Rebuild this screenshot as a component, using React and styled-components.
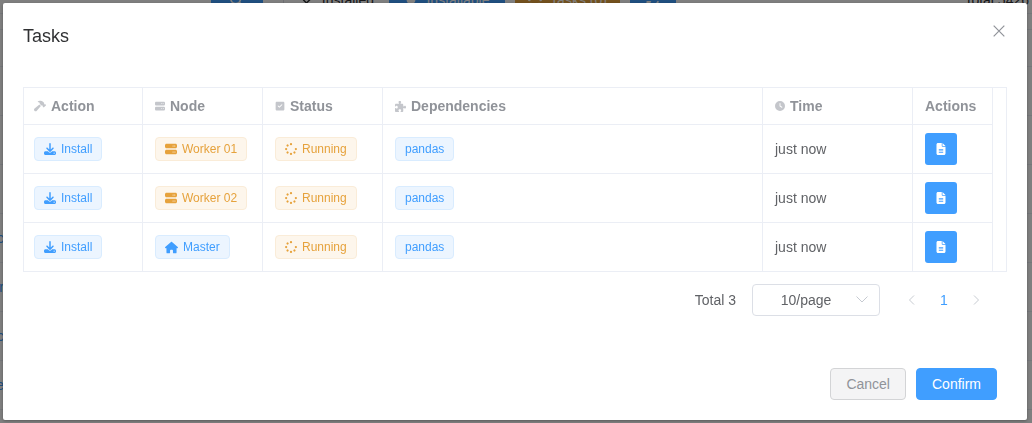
import React from "react";
import styled, { createGlobalStyle, css } from "styled-components";
import {
  FaHammer,
  FaServer,
  FaSquareCheck,
  FaPuzzlePiece,
  FaClock,
  FaHouse,
  FaFileLines,
  FaSpinner,
  FaDownload,
  FaMagnifyingGlass,
  FaCheck,
  FaPlug,
  FaArrowsRotate,
} from "react-icons/fa6";

const GlobalStyle = createGlobalStyle`
  * { box-sizing: border-box; }
  html, body, #root { height: 100%; }
  body {
    margin: 0;
    overflow: hidden;
    background: #fff;
    color: #606266;
    font: 14px/20px "Liberation Sans", Helvetica, Arial, sans-serif;
  }
  button, select { font: inherit; margin: 0; }
`;

/* Page behind the dialog */
const Page = styled.div`
  position: absolute;
  inset: 0;
  overflow: hidden;
  background: #fff;
`;

const Toolbar = styled.div`
  display: flex;
  align-items: center;
  gap: 20px;
  margin-top: -14px;
  padding: 0 3px 0 0;
  height: 28px;
  border-bottom: 1px solid #ebeef5;
`;

const SearchBox = styled.div`
  display: flex;
  justify-content: flex-end;
  width: 263px;
`;

const ToolButton = styled.button`
  display: flex;
  align-items: center;
  justify-content: ${(p) => (p.$plain ? "flex-end" : "center")};
  gap: 8px;
  width: ${(p) => p.$width}px;
  height: 32px;
  padding: ${(p) => (p.$plain ? "0 5px 0 0" : "0")};
  border: 0;
  border-left: ${(p) => (p.$plain ? "1px solid #dcdfe6" : "0")};
  color: ${(p) => (p.$plain ? "#303133" : "#fff")};
  background: ${(p) => (p.$plain ? "#fff" : p.$warning ? "#e6a23c" : "#409eff")};
`;

const ToolGroup = styled.div`
  display: flex;
  gap: 10px;
`;

const PageTotal = styled.span`
  margin-left: auto;
  color: #303133;
`;

const PageRows = styled.div`
  margin-top: 15px;
  border-top: 1px solid #ebeef5;
`;

const PageRow = styled.div`
  display: flex;
  align-items: center;
  height: ${(p) => (p.$head ? 37 : 49)}px;
  border-bottom: 1px solid #ebeef5;
`;

const PackageLink = styled.a`
  display: flex;
  justify-content: flex-end;
  width: 4px;
  color: #409eff;
  text-decoration: none;
`;

/* Dialog */
const Overlay = styled.div`
  position: fixed;
  inset: 0;
  padding: 3px 5px 3px 3px;
  background: rgba(0, 0, 0, 0.5);
`;

const Dialog = styled.section`
  display: flex;
  flex-direction: column;
  height: 100%;
  background: #fff;
  border-radius: 2px;
  box-shadow: 0 1px 3px rgba(0, 0, 0, 0.3);
`;

const Header = styled.header`
  display: flex;
  align-items: flex-start;
  justify-content: space-between;
  padding: 20px 20px 10px;
`;

const Title = styled.h2`
  margin: 0;
  font-size: 18px;
  font-weight: 400;
  line-height: 26px;
  color: #303133;
`;

const CloseButton = styled.button`
  display: flex;
  padding: 0;
  border: 0;
  background: none;
  color: #909399;
`;

const Body = styled.div`
  padding: 28px 20px;
`;

const TableFrame = styled.div`
  padding-right: 13px;
  border: 1px solid #ebeef5;
`;

const Table = styled.table`
  width: 100%;
  table-layout: fixed;
  border-collapse: separate;
  border-spacing: 0;
`;

const cell = css`
  padding: 0 12px;
  text-align: left;
  border-right: 1px solid #ebeef5;
  &:first-child { padding-left: 10px; }
`;

const HeadCell = styled.th`
  ${cell}
  width: ${(p) => (p.$width ? `${p.$width}px` : "auto")};
  height: 37px;
  border-bottom: 1px solid #ebeef5;
  color: #909399;
  font-weight: 700;
`;

const HeadLabel = styled.span`
  display: flex;
  align-items: center;
  gap: 5px;
  svg { color: #c4c6cb; }
`;

const Cell = styled.td`
  ${cell}
  height: 49px;
  border-bottom: 1px solid #ebeef5;
  tr:last-child > & {
    height: 48px;
    border-bottom: 0;
  }
`;

const Tag = styled.span`
  display: inline-flex;
  align-items: center;
  gap: 5px;
  height: 24px;
  padding: 0 9px;
  border: 1px solid ${(p) => (p.$warning ? "#faecd8" : "#d9ecff")};
  border-radius: 4px;
  background: ${(p) => (p.$warning ? "#fdf6ec" : "#ecf5ff")};
  color: ${(p) => (p.$warning ? "#e6a23c" : "#409eff")};
  font-size: 12px;
  vertical-align: middle;
`;

const LogButton = styled.button`
  display: flex;
  align-items: center;
  justify-content: center;
  width: 32px;
  height: 32px;
  padding: 0;
  border: 0;
  border-radius: 3px;
  background: #409eff;
  color: #fff;
`;

const Pagination = styled.nav`
  display: flex;
  align-items: center;
  justify-content: flex-end;
  margin-top: 12px;
  padding-right: 15px;
`;

const SizeField = styled.div`
  position: relative;
  width: 128px;
  margin: 0 16px;
  svg {
    position: absolute;
    top: 9px;
    right: 12px;
    color: #c0c4cc;
    pointer-events: none;
  }
`;

const SizeSelect = styled.select`
  display: block;
  width: 100%;
  height: 32px;
  padding: 0 20px 0 0;
  appearance: none;
  border: 1px solid #dcdfe6;
  border-radius: 4px;
  background: #fff;
  color: #606266;
  text-align: center;
  text-align-last: center;
`;

const PageButton = styled.button`
  display: flex;
  align-items: center;
  justify-content: center;
  width: 32px;
  height: 28px;
  padding: 0;
  border: 0;
  background: none;
  color: ${(p) => (p.$current ? "#409eff" : "#c0c4cc")};
`;

const Footer = styled.footer`
  display: flex;
  justify-content: flex-end;
  gap: 10px;
  margin-top: auto;
  padding: 0 30px 20px;
`;

const FooterButton = styled.button`
  height: 32px;
  padding: 0 15px;
  border: 1px solid ${(p) => (p.$primary ? "#409eff" : "#d3d4d6")};
  border-radius: 4px;
  background: ${(p) => (p.$primary ? "#409eff" : "#f4f4f5")};
  color: ${(p) => (p.$primary ? "#fff" : "#909399")};
`;

function LineIcon({ d, size }) {
  return (
    <svg width={size} height={size} viewBox="0 0 12 12" fill="none" stroke="currentColor" strokeWidth="0.9" aria-hidden="true">
      <path d={d} />
    </svg>
  );
}

const columns = [
  { label: "Action", icon: FaHammer, size: 12, width: 119 },
  { label: "Node", icon: FaServer, size: 10, width: 120 },
  { label: "Status", icon: FaSquareCheck, size: 10, width: 120 },
  { label: "Dependencies", icon: FaPuzzlePiece, size: 11 },
  { label: "Time", icon: FaClock, size: 10, width: 150 },
  { label: "Actions", width: 80 },
];

const tasks = [
  { id: 1, node: "Worker 01" },
  { id: 2, node: "Worker 02" },
  { id: 3, node: "Master", master: true },
];

const packages = ["", "", "", "c", "r", "c", "e"];

export default function App() {
  return (
    <>
      <GlobalStyle />
      <Page aria-hidden="true">
        <Toolbar>
          <SearchBox>
            <ToolButton $width={52}><FaMagnifyingGlass /></ToolButton>
          </SearchBox>
          <ToolGroup>
            <ToolButton $plain $width={96}><FaCheck size={12} />Installed</ToolButton>
            <ToolButton $width={116}><FaPlug size={14} />Installable</ToolButton>
            <ToolButton $warning $width={105}><FaSpinner size={14} />Tasks (0)</ToolButton>
            <ToolButton $width={46}><FaArrowsRotate /></ToolButton>
          </ToolGroup>
          <PageTotal>Total 5426</PageTotal>
        </Toolbar>
        <PageRows>
          <PageRow $head />
          {packages.map((name, i) => (
            <PageRow key={i}>{name && <PackageLink href="#package">{name}</PackageLink>}</PageRow>
          ))}
        </PageRows>
      </Page>
      <Overlay>
        <Dialog role="dialog" aria-labelledby="tasks-title">
          <Header>
            <Title id="tasks-title">Tasks</Title>
            <CloseButton aria-label="Close">
              <LineIcon size={16} d="M2 2L10 10M10 2L2 10" />
            </CloseButton>
          </Header>
          <Body>
            <TableFrame>
              <Table>
                <thead>
                  <tr>
                    {columns.map(({ label, icon: Icon, size, width }) => (
                      <HeadCell key={label} $width={width}>
                        <HeadLabel>{Icon && <Icon size={size} />}{label}</HeadLabel>
                      </HeadCell>
                    ))}
                  </tr>
                </thead>
                <tbody>
                  {tasks.map(({ id, node, master }) => (
                    <tr key={id}>
                      <Cell><Tag><FaDownload size={12} />Install</Tag></Cell>
                      <Cell>
                        <Tag $warning={!master}>
                          {master ? <FaHouse size={13} /> : <FaServer size={12} />}
                          {node}
                        </Tag>
                      </Cell>
                      <Cell><Tag $warning><FaSpinner size={12} />Running</Tag></Cell>
                      <Cell><Tag>pandas</Tag></Cell>
                      <Cell>just now</Cell>
                      <Cell>
                        <LogButton aria-label="View logs"><FaFileLines size={12} /></LogButton>
                      </Cell>
                    </tr>
                  ))}
                </tbody>
              </Table>
            </TableFrame>
            <Pagination aria-label="Pagination">
              <span>Total 3</span>
              <SizeField>
                <SizeSelect aria-label="Page size" defaultValue="10">
                  <option value="10">10/page</option>
                </SizeSelect>
                <LineIcon size={12} d="M0.5 3.5L6 9L11.5 3.5" />
              </SizeField>
              <PageButton aria-label="Previous page"><LineIcon size={12} d="M8 1.5L3.5 6L8 10.5" /></PageButton>
              <PageButton $current>1</PageButton>
              <PageButton aria-label="Next page"><LineIcon size={12} d="M4 1.5L8.5 6L4 10.5" /></PageButton>
            </Pagination>
          </Body>
          <Footer>
            <FooterButton>Cancel</FooterButton>
            <FooterButton $primary>Confirm</FooterButton>
          </Footer>
        </Dialog>
      </Overlay>
    </>
  );
}
